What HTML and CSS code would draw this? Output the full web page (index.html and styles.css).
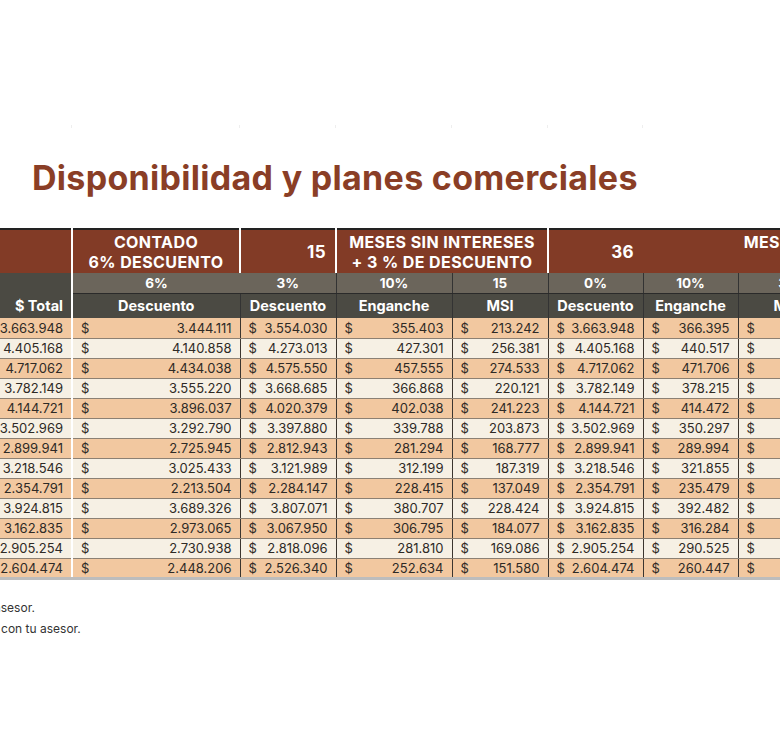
FILE: index.html
```html
<!DOCTYPE html>
<html lang="es">
<head>
    <meta charset="utf-8">
    <title>Disponibilidad y planes comerciales</title>
    <link rel="stylesheet" href="styles.css">
</head>
<body>
    <div class="marks">
        <span></span><span></span><span></span><span></span><span></span><span></span>
    </div>
    <h1 class="title">Disponibilidad y planes comerciales</h1>
    <section class="sheet">
        <table class="plans">
            <colgroup>
                <col class="c_total">
                <col class="c_wide">
                <col class="c_mid">
                <col class="c_eng">
                <col class="c_mid">
                <col class="c_low">
                <col class="c_low">
                <col class="c_msi">
                <col class="c_end">
            </colgroup>
            <thead>
                <tr class="row_plan">
                    <th class="blank"></th>
                    <th class="split">CONTADO<br>6% DESCUENTO</th>
                    <th class="term">15</th>
                    <th class="split" colspan="2">MESES SIN INTERESES<br>+ 3 % DE DESCUENTO</th>
                    <th class="term open">36</th>
                    <th class="open"></th>
                    <th class="split" colspan="2">MESES SIN INTERESES<br>+ 0 %</th>
                </tr>
                <tr class="row_rate">
                    <th class="blank total_head" rowspan="2">$ Total</th>
                    <th class="open">6%</th>
                    <th>3%</th>
                    <th>10%</th>
                    <th>15</th>
                    <th>0%</th>
                    <th>10%</th>
                    <th>36</th>
                    <th></th>
                </tr>
                <tr class="row_name">
                    <th>Descuento</th>
                    <th>Descuento</th>
                    <th>Enganche</th>
                    <th>MSI</th>
                    <th>Descuento</th>
                    <th>Enganche</th>
                    <th>MSI</th>
                    <th></th>
                </tr>
            </thead>
            <tbody>
                <tr><td><div class="money"><span>$</span><span>3.663.948</span></div></td><td><div class="money"><span>$</span><span>3.444.111</span></div></td><td><div class="money"><span>$</span><span>3.554.030</span></div></td><td><div class="money"><span>$</span><span>355.403</span></div></td><td><div class="money"><span>$</span><span>213.242</span></div></td><td><div class="money"><span>$</span><span>3.663.948</span></div></td><td><div class="money"><span>$</span><span>366.395</span></div></td><td><div class="money"><span>$</span><span>91.599</span></div></td><td></td></tr>
                <tr><td><div class="money"><span>$</span><span>4.405.168</span></div></td><td><div class="money"><span>$</span><span>4.140.858</span></div></td><td><div class="money"><span>$</span><span>4.273.013</span></div></td><td><div class="money"><span>$</span><span>427.301</span></div></td><td><div class="money"><span>$</span><span>256.381</span></div></td><td><div class="money"><span>$</span><span>4.405.168</span></div></td><td><div class="money"><span>$</span><span>440.517</span></div></td><td><div class="money"><span>$</span><span>110.129</span></div></td><td></td></tr>
                <tr><td><div class="money"><span>$</span><span>4.717.062</span></div></td><td><div class="money"><span>$</span><span>4.434.038</span></div></td><td><div class="money"><span>$</span><span>4.575.550</span></div></td><td><div class="money"><span>$</span><span>457.555</span></div></td><td><div class="money"><span>$</span><span>274.533</span></div></td><td><div class="money"><span>$</span><span>4.717.062</span></div></td><td><div class="money"><span>$</span><span>471.706</span></div></td><td><div class="money"><span>$</span><span>117.927</span></div></td><td></td></tr>
                <tr><td><div class="money"><span>$</span><span>3.782.149</span></div></td><td><div class="money"><span>$</span><span>3.555.220</span></div></td><td><div class="money"><span>$</span><span>3.668.685</span></div></td><td><div class="money"><span>$</span><span>366.868</span></div></td><td><div class="money"><span>$</span><span>220.121</span></div></td><td><div class="money"><span>$</span><span>3.782.149</span></div></td><td><div class="money"><span>$</span><span>378.215</span></div></td><td><div class="money"><span>$</span><span>94.554</span></div></td><td></td></tr>
                <tr><td><div class="money"><span>$</span><span>4.144.721</span></div></td><td><div class="money"><span>$</span><span>3.896.037</span></div></td><td><div class="money"><span>$</span><span>4.020.379</span></div></td><td><div class="money"><span>$</span><span>402.038</span></div></td><td><div class="money"><span>$</span><span>241.223</span></div></td><td><div class="money"><span>$</span><span>4.144.721</span></div></td><td><div class="money"><span>$</span><span>414.472</span></div></td><td><div class="money"><span>$</span><span>103.618</span></div></td><td></td></tr>
                <tr><td><div class="money"><span>$</span><span>3.502.969</span></div></td><td><div class="money"><span>$</span><span>3.292.790</span></div></td><td><div class="money"><span>$</span><span>3.397.880</span></div></td><td><div class="money"><span>$</span><span>339.788</span></div></td><td><div class="money"><span>$</span><span>203.873</span></div></td><td><div class="money"><span>$</span><span>3.502.969</span></div></td><td><div class="money"><span>$</span><span>350.297</span></div></td><td><div class="money"><span>$</span><span>87.574</span></div></td><td></td></tr>
                <tr><td><div class="money"><span>$</span><span>2.899.941</span></div></td><td><div class="money"><span>$</span><span>2.725.945</span></div></td><td><div class="money"><span>$</span><span>2.812.943</span></div></td><td><div class="money"><span>$</span><span>281.294</span></div></td><td><div class="money"><span>$</span><span>168.777</span></div></td><td><div class="money"><span>$</span><span>2.899.941</span></div></td><td><div class="money"><span>$</span><span>289.994</span></div></td><td><div class="money"><span>$</span><span>72.499</span></div></td><td></td></tr>
                <tr><td><div class="money"><span>$</span><span>3.218.546</span></div></td><td><div class="money"><span>$</span><span>3.025.433</span></div></td><td><div class="money"><span>$</span><span>3.121.989</span></div></td><td><div class="money"><span>$</span><span>312.199</span></div></td><td><div class="money"><span>$</span><span>187.319</span></div></td><td><div class="money"><span>$</span><span>3.218.546</span></div></td><td><div class="money"><span>$</span><span>321.855</span></div></td><td><div class="money"><span>$</span><span>80.464</span></div></td><td></td></tr>
                <tr><td><div class="money"><span>$</span><span>2.354.791</span></div></td><td><div class="money"><span>$</span><span>2.213.504</span></div></td><td><div class="money"><span>$</span><span>2.284.147</span></div></td><td><div class="money"><span>$</span><span>228.415</span></div></td><td><div class="money"><span>$</span><span>137.049</span></div></td><td><div class="money"><span>$</span><span>2.354.791</span></div></td><td><div class="money"><span>$</span><span>235.479</span></div></td><td><div class="money"><span>$</span><span>58.870</span></div></td><td></td></tr>
                <tr><td><div class="money"><span>$</span><span>3.924.815</span></div></td><td><div class="money"><span>$</span><span>3.689.326</span></div></td><td><div class="money"><span>$</span><span>3.807.071</span></div></td><td><div class="money"><span>$</span><span>380.707</span></div></td><td><div class="money"><span>$</span><span>228.424</span></div></td><td><div class="money"><span>$</span><span>3.924.815</span></div></td><td><div class="money"><span>$</span><span>392.482</span></div></td><td><div class="money"><span>$</span><span>98.120</span></div></td><td></td></tr>
                <tr><td><div class="money"><span>$</span><span>3.162.835</span></div></td><td><div class="money"><span>$</span><span>2.973.065</span></div></td><td><div class="money"><span>$</span><span>3.067.950</span></div></td><td><div class="money"><span>$</span><span>306.795</span></div></td><td><div class="money"><span>$</span><span>184.077</span></div></td><td><div class="money"><span>$</span><span>3.162.835</span></div></td><td><div class="money"><span>$</span><span>316.284</span></div></td><td><div class="money"><span>$</span><span>79.071</span></div></td><td></td></tr>
                <tr><td><div class="money"><span>$</span><span>2.905.254</span></div></td><td><div class="money"><span>$</span><span>2.730.938</span></div></td><td><div class="money"><span>$</span><span>2.818.096</span></div></td><td><div class="money"><span>$</span><span>281.810</span></div></td><td><div class="money"><span>$</span><span>169.086</span></div></td><td><div class="money"><span>$</span><span>2.905.254</span></div></td><td><div class="money"><span>$</span><span>290.525</span></div></td><td><div class="money"><span>$</span><span>72.631</span></div></td><td></td></tr>
                <tr><td><div class="money"><span>$</span><span>2.604.474</span></div></td><td><div class="money"><span>$</span><span>2.448.206</span></div></td><td><div class="money"><span>$</span><span>2.526.340</span></div></td><td><div class="money"><span>$</span><span>252.634</span></div></td><td><div class="money"><span>$</span><span>151.580</span></div></td><td><div class="money"><span>$</span><span>2.604.474</span></div></td><td><div class="money"><span>$</span><span>260.447</span></div></td><td><div class="money"><span>$</span><span>65.112</span></div></td><td></td></tr>
            </tbody>
        </table>
        <div class="notes">
            <p>*Precios sujetos a cambio sin previo aviso, consulta a tu asesor.</p>
            <p>**Planes de pago sujetos a aprobación. Consulta detalles con tu asesor.</p>
        </div>
    </section>
</body>
</html>
```

FILE: styles.css
```css
*{
    box-sizing: border-box;
    padding: 0;
    margin: 0;
}
body{
    width: 780px;
    overflow: hidden;
    background: #fff;
    font-family: "Inter", "Open Sans", sans-serif;
    color: #2e2a26;
}
/* restos de la cuadricula arriba */
.marks{
    display: grid;
    grid-template-columns: 72px 168px 96px 116px 96px 95px 95px;
    height: 128px;
    align-items: end;
}
.marks span{
    height: 3px;
    border-right: 1px solid #eee;
}
.title{
    margin: 30px 0 30px 32px;
    font-size: 34px;
    line-height: 40px;
    font-weight: 700;
    color: #8a3e26;
    letter-spacing: 0.3px;
}
.sheet{
    margin-left: -80px;
}
.plans{
    border-collapse: collapse;
    table-layout: fixed;
    width: 1016px;
    font-size: 13px;
}
.c_total{ width: 152px; }
.c_wide{ width: 168px; }
.c_mid{ width: 96px; }
.c_eng{ width: 116px; }
.c_low{ width: 95px; }
.c_msi{ width: 98px; }
.c_end{ width: 100px; }
.plans th{
    color: #fff;
    font-weight: 700;
    white-space: nowrap;
}
.row_plan th{
    height: 44px;
    background: #823b26;
    border-top: 2px solid #222;
    font-size: 16px;
    line-height: 20px;
    letter-spacing: 0.4px;
    text-align: center;
    border-right: 2px solid #fff;
}
.row_plan .term{
    text-align: right;
    font-size: 17px;
    padding-right: 9px;
}
.row_plan .open{
    border-right: none;
}
.row_rate th{
    height: 20px;
    background: #6b655b;
    border-right: 1px solid #333;
    border-bottom: 1px solid #2a2a2a;
    font-size: 13.5px;
}
.row_rate .open{
    border-right: none;
}
.row_name th{
    height: 25px;
    background: #4b4a43;
    border-right: 1px solid #333;
    font-size: 14.5px;
}
.plans .blank{
    background: #823b26;
    border-right: 2px solid #fff;
}
.plans .total_head{
    background: #4b4a43;
    text-align: right;
    vertical-align: bottom;
    padding: 0 8px 4px 0;
    font-size: 14.5px;
    border-bottom: none;
}
.plans td{
    height: 20px;
    padding: 0 8px;
    border-right: 1px solid #3b352f;
    border-bottom: 1px solid #8c8073;
    font-size: 13px;
    line-height: 18px;
}
.plans td:first-child{
    border-right: 2px solid #fff;
}
.plans tbody tr:nth-child(odd) td{
    background: #f2c8a0;
}
.plans tbody tr:nth-child(even) td{
    background: #f6f0e4;
}
.plans tbody tr:last-child td{
    border-bottom: 3px solid #bdbdbd;
}
.money{
    display: flex;
    justify-content: space-between;
}
.notes{
    padding: 17px 0 0 0;
    margin-left: -248px;
    font-size: 12px;
    line-height: 21px;
    color: #333;
    white-space: nowrap;
}
```
